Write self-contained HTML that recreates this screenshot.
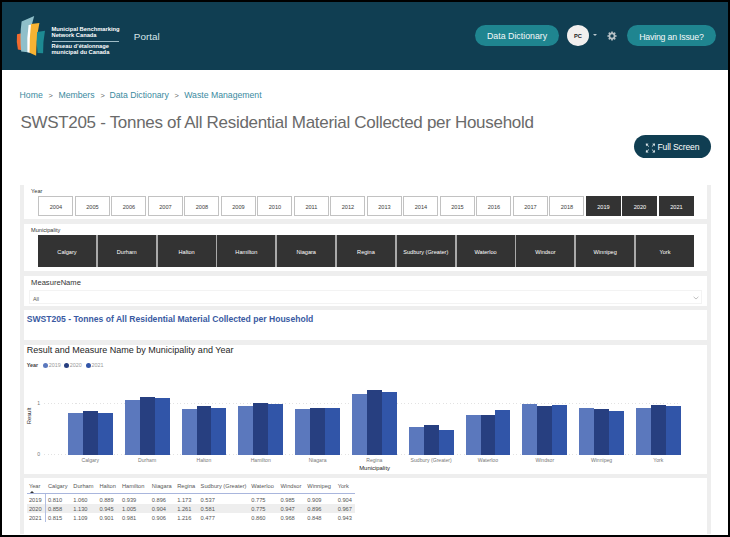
<!DOCTYPE html>
<html><head><meta charset="utf-8">
<style>
*{margin:0;padding:0;box-sizing:border-box}
html,body{width:730px;height:537px;overflow:hidden;background:#000}
body{position:relative;font-family:"Liberation Sans",sans-serif}
.a{position:absolute}
.t{position:absolute;white-space:nowrap;line-height:1}
</style></head><body>
<div class="a" style="left:2px;top:2px;width:726px;height:533px;background:#fff"></div>

<div class="a" style="left:2.00px;top:2.00px;width:726.00px;height:68.00px;background:#103e52"></div>
<svg class="a" style="left:14px;top:14px" width="34" height="44" viewBox="14 14 34 44">
<path d="M17 34.2 L21.6 33.3 L21.6 50.2 L17.9 49.6 Q16.2 42 17 34.2Z" fill="#f06a2e"/>
<path d="M21.6 21.6 L34.2 16.1 L31.6 25.5 L30 52.4 L21.2 51.5 Q19.6 36 21.6 21.6Z" fill="#8fbfca"/>
<path d="M28.6 24.9 L32 24.4 Q29.6 38 29.9 52.8 L27.4 52.3 Q26.6 38 28.6 24.9Z" fill="#ffffff"/>
<path d="M31 24 L39.4 23 Q36.4 38 36.1 55.7 L29.6 52.8 Q29.4 38 31 24Z" fill="#f8b332"/>
<path d="M37.1 31.9 L45 30.7 Q42.8 42 43.1 53.3 L37.6 52.9 Q35.8 42 37.1 31.9Z" fill="#1d8a92"/>
</svg>
<div class="t" style="left:51.50px;top:27.03px;font-size:5.75px;color:#fff;font-weight:bold">Municipal Benchmarking</div>
<div class="t" style="left:51.50px;top:32.63px;font-size:5.75px;color:#fff;font-weight:bold">Network Canada</div>
<div class="a" style="left:51.60px;top:40.50px;width:67.40px;height:0.70px;background:#9fbcc6"></div>
<div class="t" style="left:51.50px;top:43.93px;font-size:5.75px;color:#fff;font-weight:bold">R&eacute;seau d&rsquo;&eacute;talonnage</div>
<div class="t" style="left:51.50px;top:49.53px;font-size:5.75px;color:#fff;font-weight:bold">municipal du Canada</div>
<div class="t" style="left:133.80px;top:32.12px;font-size:9.90px;color:#d8e6ea">Portal</div>
<div class="a" style="left:475.00px;top:25.10px;width:83.50px;height:21.30px;background:#1f8590;border-radius:11px"></div>
<div class="t" style="left:487.00px;top:32.35px;font-size:8.80px;color:#f4f8f9">Data Dictionary</div>
<div class="a" style="left:567.20px;top:25.30px;width:21.50px;height:21.00px;background:#f1efee;border-radius:50%"></div>
<div class="t" style="left:570.50px;top:33.57px;font-size:5.70px;color:#222;font-weight:bold;width:15.00px;text-align:center">PC</div>
<div class="a" style="left:593.4px;top:34px;width:0;height:0;border-left:2.9px solid transparent;border-right:2.9px solid transparent;border-top:2.6px solid #b9c6cc"></div>
<svg class="a" style="left:606.6px;top:31px" width="10" height="10" viewBox="-5 -5 10 10">
<circle r="2.55" fill="none" stroke="#b7c1c6" stroke-width="1.7"/>
<g fill="#b7c1c6">
<rect x="-0.85" y="-4.6" width="1.7" height="9.2" rx="0.3"/>
<rect x="-0.85" y="-4.6" width="1.7" height="9.2" rx="0.3" transform="rotate(45)"/>
<rect x="-0.85" y="-4.6" width="1.7" height="9.2" rx="0.3" transform="rotate(90)"/>
<rect x="-0.85" y="-4.6" width="1.7" height="9.2" rx="0.3" transform="rotate(135)"/>
</g><circle r="1.7" fill="#103e52"/></svg>
<div class="a" style="left:627.00px;top:25.30px;width:88.50px;height:21.20px;background:#1f8590;border-radius:11px"></div>
<div class="t" style="left:639.20px;top:33.15px;font-size:8.80px;color:#f4f8f9;letter-spacing:-0.22px">Having an Issue?</div>
<div class="t" style="left:19.60px;top:91.04px;font-size:8.70px;color:#3b8aa0">Home</div>
<div class="t" style="left:58.40px;top:91.04px;font-size:8.70px;color:#3b8aa0">Members</div>
<div class="t" style="left:109.40px;top:91.04px;font-size:8.70px;color:#3b8aa0">Data Dictionary</div>
<div class="t" style="left:184.20px;top:91.04px;font-size:8.70px;color:#3b8aa0">Waste Management</div>
<div class="t" style="left:48.60px;top:91.84px;font-size:7.40px;color:#666">&gt;</div>
<div class="t" style="left:100.40px;top:91.84px;font-size:7.40px;color:#666">&gt;</div>
<div class="t" style="left:174.40px;top:91.84px;font-size:7.40px;color:#666">&gt;</div>
<div class="t" style="left:20.40px;top:113.81px;font-size:17.00px;color:#6a6a6a;letter-spacing:-0.3px">SWST205 - Tonnes of All Residential Material Collected per Household</div>
<div class="a" style="left:634.40px;top:135.20px;width:76.50px;height:22.50px;background:#103e52;border-radius:11.5px"></div>
<svg class="a" style="left:645px;top:143px" width="11" height="10" viewBox="0 0 11 10">
<g fill="#dde6ea" stroke="none">
<path d="M0.8 0.5 L3.6 0.7 L1.0 3.3Z"/>
<path d="M10.0 0.5 L7.2 0.7 L9.8 3.3Z"/>
<path d="M0.8 9.6 L3.6 9.4 L1.0 6.8Z"/>
<path d="M10.0 9.6 L7.2 9.4 L9.8 6.8Z"/>
</g>
<g stroke="#dde6ea" stroke-width="0.9" fill="none">
<path d="M2 1.8 L3.9 3.6 M8.8 1.8 L6.9 3.6 M2 8.3 L3.9 6.5 M8.8 8.3 L6.9 6.5"/>
</g></svg>
<div class="t" style="left:657.50px;top:142.82px;font-size:8.60px;color:#fff;letter-spacing:-0.15px">Full Screen</div>
<div class="a" style="left:20.00px;top:185.00px;width:690.60px;height:348.50px;background:#eeeeee"></div>
<div class="a" style="left:24.00px;top:185.00px;width:683.00px;height:34.00px;background:#fff"></div>
<div class="a" style="left:24.00px;top:224.00px;width:683.00px;height:47.00px;background:#fff"></div>
<div class="a" style="left:24.00px;top:275.50px;width:683.00px;height:30.00px;background:#fff"></div>
<div class="a" style="left:24.00px;top:309.70px;width:683.00px;height:30.70px;background:#fff"></div>
<div class="a" style="left:24.00px;top:344.50px;width:683.00px;height:129.00px;background:#fff"></div>
<div class="a" style="left:24.00px;top:478.00px;width:683.00px;height:55.50px;background:#fff"></div>
<div class="t" style="left:31.10px;top:189.36px;font-size:5.60px;color:#333">Year</div>
<div class="a" style="left:38.30px;top:196.00px;width:35.20px;height:20.00px;background:#fff;border:1px solid #c2c2c2"></div>
<div class="t" style="left:38.30px;top:204.86px;font-size:5.60px;color:#3d3d3d;width:35.20px;text-align:center">2004</div>
<div class="a" style="left:74.80px;top:196.00px;width:35.20px;height:20.00px;background:#fff;border:1px solid #c2c2c2"></div>
<div class="t" style="left:74.80px;top:204.86px;font-size:5.60px;color:#3d3d3d;width:35.20px;text-align:center">2005</div>
<div class="a" style="left:111.30px;top:196.00px;width:35.20px;height:20.00px;background:#fff;border:1px solid #c2c2c2"></div>
<div class="t" style="left:111.30px;top:204.86px;font-size:5.60px;color:#3d3d3d;width:35.20px;text-align:center">2006</div>
<div class="a" style="left:147.80px;top:196.00px;width:35.20px;height:20.00px;background:#fff;border:1px solid #c2c2c2"></div>
<div class="t" style="left:147.80px;top:204.86px;font-size:5.60px;color:#3d3d3d;width:35.20px;text-align:center">2007</div>
<div class="a" style="left:184.30px;top:196.00px;width:35.20px;height:20.00px;background:#fff;border:1px solid #c2c2c2"></div>
<div class="t" style="left:184.30px;top:204.86px;font-size:5.60px;color:#3d3d3d;width:35.20px;text-align:center">2008</div>
<div class="a" style="left:220.80px;top:196.00px;width:35.20px;height:20.00px;background:#fff;border:1px solid #c2c2c2"></div>
<div class="t" style="left:220.80px;top:204.86px;font-size:5.60px;color:#3d3d3d;width:35.20px;text-align:center">2009</div>
<div class="a" style="left:257.30px;top:196.00px;width:35.20px;height:20.00px;background:#fff;border:1px solid #c2c2c2"></div>
<div class="t" style="left:257.30px;top:204.86px;font-size:5.60px;color:#3d3d3d;width:35.20px;text-align:center">2010</div>
<div class="a" style="left:293.80px;top:196.00px;width:35.20px;height:20.00px;background:#fff;border:1px solid #c2c2c2"></div>
<div class="t" style="left:293.80px;top:204.86px;font-size:5.60px;color:#3d3d3d;width:35.20px;text-align:center">2011</div>
<div class="a" style="left:330.30px;top:196.00px;width:35.20px;height:20.00px;background:#fff;border:1px solid #c2c2c2"></div>
<div class="t" style="left:330.30px;top:204.86px;font-size:5.60px;color:#3d3d3d;width:35.20px;text-align:center">2012</div>
<div class="a" style="left:366.80px;top:196.00px;width:35.20px;height:20.00px;background:#fff;border:1px solid #c2c2c2"></div>
<div class="t" style="left:366.80px;top:204.86px;font-size:5.60px;color:#3d3d3d;width:35.20px;text-align:center">2013</div>
<div class="a" style="left:403.30px;top:196.00px;width:35.20px;height:20.00px;background:#fff;border:1px solid #c2c2c2"></div>
<div class="t" style="left:403.30px;top:204.86px;font-size:5.60px;color:#3d3d3d;width:35.20px;text-align:center">2014</div>
<div class="a" style="left:439.80px;top:196.00px;width:35.20px;height:20.00px;background:#fff;border:1px solid #c2c2c2"></div>
<div class="t" style="left:439.80px;top:204.86px;font-size:5.60px;color:#3d3d3d;width:35.20px;text-align:center">2015</div>
<div class="a" style="left:476.30px;top:196.00px;width:35.20px;height:20.00px;background:#fff;border:1px solid #c2c2c2"></div>
<div class="t" style="left:476.30px;top:204.86px;font-size:5.60px;color:#3d3d3d;width:35.20px;text-align:center">2016</div>
<div class="a" style="left:512.80px;top:196.00px;width:35.20px;height:20.00px;background:#fff;border:1px solid #c2c2c2"></div>
<div class="t" style="left:512.80px;top:204.86px;font-size:5.60px;color:#3d3d3d;width:35.20px;text-align:center">2017</div>
<div class="a" style="left:549.30px;top:196.00px;width:35.20px;height:20.00px;background:#fff;border:1px solid #c2c2c2"></div>
<div class="t" style="left:549.30px;top:204.86px;font-size:5.60px;color:#3d3d3d;width:35.20px;text-align:center">2018</div>
<div class="a" style="left:585.80px;top:196.00px;width:35.20px;height:20.00px;background:#333"></div>
<div class="t" style="left:585.80px;top:204.86px;font-size:5.60px;color:#fff;width:35.20px;text-align:center">2019</div>
<div class="a" style="left:622.30px;top:196.00px;width:35.20px;height:20.00px;background:#333"></div>
<div class="t" style="left:622.30px;top:204.86px;font-size:5.60px;color:#fff;width:35.20px;text-align:center">2020</div>
<div class="a" style="left:658.80px;top:196.00px;width:35.20px;height:20.00px;background:#333"></div>
<div class="t" style="left:658.80px;top:204.86px;font-size:5.60px;color:#fff;width:35.20px;text-align:center">2021</div>
<div class="t" style="left:31.10px;top:228.26px;font-size:5.60px;color:#333">Municipality</div>
<div class="a" style="left:37.90px;top:235.30px;width:656.20px;height:31.50px;background:#aaaaaa"></div>
<div class="a" style="left:37.90px;top:235.00px;width:58.20px;height:32.00px;background:#333"></div>
<div class="t" style="left:37.90px;top:250.26px;font-size:5.60px;color:#fff;width:58.20px;text-align:center">Calgary</div>
<div class="a" style="left:97.70px;top:235.00px;width:58.20px;height:32.00px;background:#333"></div>
<div class="t" style="left:97.70px;top:250.26px;font-size:5.60px;color:#fff;width:58.20px;text-align:center">Durham</div>
<div class="a" style="left:157.50px;top:235.00px;width:58.20px;height:32.00px;background:#333"></div>
<div class="t" style="left:157.50px;top:250.26px;font-size:5.60px;color:#fff;width:58.20px;text-align:center">Halton</div>
<div class="a" style="left:217.30px;top:235.00px;width:58.20px;height:32.00px;background:#333"></div>
<div class="t" style="left:217.30px;top:250.26px;font-size:5.60px;color:#fff;width:58.20px;text-align:center">Hamilton</div>
<div class="a" style="left:277.10px;top:235.00px;width:58.20px;height:32.00px;background:#333"></div>
<div class="t" style="left:277.10px;top:250.26px;font-size:5.60px;color:#fff;width:58.20px;text-align:center">Niagara</div>
<div class="a" style="left:336.90px;top:235.00px;width:58.20px;height:32.00px;background:#333"></div>
<div class="t" style="left:336.90px;top:250.26px;font-size:5.60px;color:#fff;width:58.20px;text-align:center">Regina</div>
<div class="a" style="left:396.70px;top:235.00px;width:58.20px;height:32.00px;background:#333"></div>
<div class="t" style="left:396.70px;top:250.26px;font-size:5.60px;color:#fff;width:58.20px;text-align:center">Sudbury (Greater)</div>
<div class="a" style="left:456.50px;top:235.00px;width:58.20px;height:32.00px;background:#333"></div>
<div class="t" style="left:456.50px;top:250.26px;font-size:5.60px;color:#fff;width:58.20px;text-align:center">Waterloo</div>
<div class="a" style="left:516.30px;top:235.00px;width:58.20px;height:32.00px;background:#333"></div>
<div class="t" style="left:516.30px;top:250.26px;font-size:5.60px;color:#fff;width:58.20px;text-align:center">Windsor</div>
<div class="a" style="left:576.10px;top:235.00px;width:58.20px;height:32.00px;background:#333"></div>
<div class="t" style="left:576.10px;top:250.26px;font-size:5.60px;color:#fff;width:58.20px;text-align:center">Winnipeg</div>
<div class="a" style="left:635.90px;top:235.00px;width:58.20px;height:32.00px;background:#333"></div>
<div class="t" style="left:635.90px;top:250.26px;font-size:5.60px;color:#fff;width:58.20px;text-align:center">York</div>
<div class="t" style="left:31.10px;top:279.07px;font-size:7.60px;color:#333">MeasureName</div>
<div class="a" style="left:29.30px;top:290.40px;width:672.60px;height:13.30px;background:#fff;border:1px solid #f3f3f3"></div>
<div class="t" style="left:33.00px;top:296.53px;font-size:5.40px;color:#555">All</div>
<svg class="a" style="left:692.6px;top:296px" width="6" height="4" viewBox="0 0 6 4"><path d="M0.6 0.8 L3 3 L5.4 0.8" stroke="#999" stroke-width="0.6" fill="none"/></svg>
<div class="t" style="left:26.80px;top:314.64px;font-size:8.58px;color:#3a5aa2;font-weight:bold">SWST205 - Tonnes of All Residential Material Collected per Household</div>
<div class="t" style="left:26.80px;top:346.38px;font-size:9.00px;color:#262626">Result and Measure Name by Municipality and Year</div>
<div class="t" style="left:26.70px;top:363.03px;font-size:5.40px;color:#444;font-weight:bold">Year</div>
<div class="a" style="left:42.90px;top:363.00px;width:5.20px;height:5.20px;background:#5b78bd;border-radius:50%"></div>
<div class="t" style="left:48.70px;top:363.13px;font-size:5.40px;color:#999">2019</div>
<div class="a" style="left:64.00px;top:363.00px;width:5.20px;height:5.20px;background:#273f80;border-radius:50%"></div>
<div class="t" style="left:69.80px;top:363.13px;font-size:5.40px;color:#999">2020</div>
<div class="a" style="left:85.80px;top:363.00px;width:5.20px;height:5.20px;background:#3155a8;border-radius:50%"></div>
<div class="t" style="left:91.60px;top:363.13px;font-size:5.40px;color:#999">2021</div>
<div class="a" style="left:44.4px;top:402.70px;width:637px;height:1px;background:repeating-linear-gradient(90deg,#e2e2e2 0 1px,transparent 1px 3.5px)"></div>
<div class="t" style="left:37.30px;top:400.78px;font-size:5.10px;color:#777">1</div>
<div class="a" style="left:44.4px;top:453.70px;width:637px;height:1px;background:repeating-linear-gradient(90deg,#e2e2e2 0 1px,transparent 1px 3.5px)"></div>
<div class="t" style="left:37.30px;top:451.78px;font-size:5.10px;color:#777">0</div>
<div class="t" style="left:29.6px;top:415.9px;font-size:5.9px;color:#333;transform:translate(-50%,-50%) rotate(-90deg)">Result</div>
<div class="a" style="left:68.00px;top:413.05px;width:14.95px;height:41.55px;background:#5b78bd"></div>
<div class="a" style="left:82.90px;top:410.58px;width:14.95px;height:44.02px;background:#273f80"></div>
<div class="a" style="left:97.80px;top:412.79px;width:14.95px;height:41.81px;background:#3155a8"></div>
<div class="t" style="left:50.35px;top:457.88px;font-size:5.10px;color:#777;width:80.00px;text-align:center">Calgary</div>
<div class="a" style="left:124.80px;top:400.22px;width:14.95px;height:54.38px;background:#5b78bd"></div>
<div class="a" style="left:139.70px;top:396.63px;width:14.95px;height:57.97px;background:#273f80"></div>
<div class="a" style="left:154.60px;top:397.71px;width:14.95px;height:56.89px;background:#3155a8"></div>
<div class="t" style="left:107.15px;top:457.88px;font-size:5.10px;color:#777;width:80.00px;text-align:center">Durham</div>
<div class="a" style="left:181.60px;top:408.99px;width:14.95px;height:45.61px;background:#5b78bd"></div>
<div class="a" style="left:196.50px;top:406.12px;width:14.95px;height:48.48px;background:#273f80"></div>
<div class="a" style="left:211.40px;top:408.38px;width:14.95px;height:46.22px;background:#3155a8"></div>
<div class="t" style="left:163.95px;top:457.88px;font-size:5.10px;color:#777;width:80.00px;text-align:center">Halton</div>
<div class="a" style="left:238.40px;top:406.43px;width:14.95px;height:48.17px;background:#5b78bd"></div>
<div class="a" style="left:253.30px;top:403.04px;width:14.95px;height:51.56px;background:#273f80"></div>
<div class="a" style="left:268.20px;top:404.27px;width:14.95px;height:50.33px;background:#3155a8"></div>
<div class="t" style="left:220.75px;top:457.88px;font-size:5.10px;color:#777;width:80.00px;text-align:center">Hamilton</div>
<div class="a" style="left:295.20px;top:408.64px;width:14.95px;height:45.96px;background:#5b78bd"></div>
<div class="a" style="left:310.10px;top:408.22px;width:14.95px;height:46.38px;background:#273f80"></div>
<div class="a" style="left:325.00px;top:408.12px;width:14.95px;height:46.48px;background:#3155a8"></div>
<div class="t" style="left:277.55px;top:457.88px;font-size:5.10px;color:#777;width:80.00px;text-align:center">Niagara</div>
<div class="a" style="left:352.00px;top:394.43px;width:14.95px;height:60.17px;background:#5b78bd"></div>
<div class="a" style="left:366.90px;top:389.91px;width:14.95px;height:64.69px;background:#273f80"></div>
<div class="a" style="left:381.80px;top:392.22px;width:14.95px;height:62.38px;background:#3155a8"></div>
<div class="t" style="left:334.35px;top:457.88px;font-size:5.10px;color:#777;width:80.00px;text-align:center">Regina</div>
<div class="a" style="left:408.80px;top:427.05px;width:14.95px;height:27.55px;background:#5b78bd"></div>
<div class="a" style="left:423.70px;top:424.79px;width:14.95px;height:29.81px;background:#273f80"></div>
<div class="a" style="left:438.60px;top:430.13px;width:14.95px;height:24.47px;background:#3155a8"></div>
<div class="t" style="left:391.15px;top:457.88px;font-size:5.10px;color:#777;width:80.00px;text-align:center">Sudbury (Greater)</div>
<div class="a" style="left:465.60px;top:414.84px;width:14.95px;height:39.76px;background:#5b78bd"></div>
<div class="a" style="left:480.50px;top:414.84px;width:14.95px;height:39.76px;background:#273f80"></div>
<div class="a" style="left:495.40px;top:410.48px;width:14.95px;height:44.12px;background:#3155a8"></div>
<div class="t" style="left:447.95px;top:457.88px;font-size:5.10px;color:#777;width:80.00px;text-align:center">Waterloo</div>
<div class="a" style="left:522.40px;top:404.07px;width:14.95px;height:50.53px;background:#5b78bd"></div>
<div class="a" style="left:537.30px;top:406.02px;width:14.95px;height:48.58px;background:#273f80"></div>
<div class="a" style="left:552.20px;top:404.94px;width:14.95px;height:49.66px;background:#3155a8"></div>
<div class="t" style="left:504.75px;top:457.88px;font-size:5.10px;color:#777;width:80.00px;text-align:center">Windsor</div>
<div class="a" style="left:579.20px;top:407.97px;width:14.95px;height:46.63px;background:#5b78bd"></div>
<div class="a" style="left:594.10px;top:408.64px;width:14.95px;height:45.96px;background:#273f80"></div>
<div class="a" style="left:609.00px;top:411.10px;width:14.95px;height:43.50px;background:#3155a8"></div>
<div class="t" style="left:561.55px;top:457.88px;font-size:5.10px;color:#777;width:80.00px;text-align:center">Winnipeg</div>
<div class="a" style="left:636.00px;top:408.22px;width:14.95px;height:46.38px;background:#5b78bd"></div>
<div class="a" style="left:650.90px;top:404.99px;width:14.95px;height:49.61px;background:#273f80"></div>
<div class="a" style="left:665.80px;top:406.22px;width:14.95px;height:48.38px;background:#3155a8"></div>
<div class="t" style="left:618.35px;top:457.88px;font-size:5.10px;color:#777;width:80.00px;text-align:center">York</div>
<div class="t" style="left:334.60px;top:465.51px;font-size:5.90px;color:#222;width:80.00px;text-align:center">Municipality</div>
<div class="a" style="left:27.00px;top:504.30px;width:327.70px;height:8.70px;background:#eeeeee"></div>
<div class="a" style="left:27.00px;top:493.30px;width:327.70px;height:1.00px;background:#a9b6dd"></div>
<div class="a" style="left:44.60px;top:493.80px;width:1.00px;height:28.40px;background:#b3bfe2"></div>
<div class="t" style="left:28.90px;top:484.37px;font-size:5.70px;color:#555">Year</div>
<div class="t" style="left:47.90px;top:484.37px;font-size:5.70px;color:#555">Calgary</div>
<div class="t" style="left:73.30px;top:484.37px;font-size:5.70px;color:#555">Durham</div>
<div class="t" style="left:99.40px;top:484.37px;font-size:5.70px;color:#555">Halton</div>
<div class="t" style="left:122.00px;top:484.37px;font-size:5.70px;color:#555">Hamilton</div>
<div class="t" style="left:151.80px;top:484.37px;font-size:5.70px;color:#555">Niagara</div>
<div class="t" style="left:177.20px;top:484.37px;font-size:5.70px;color:#555">Regina</div>
<div class="t" style="left:200.60px;top:484.37px;font-size:5.70px;color:#555">Sudbury (Greater)</div>
<div class="t" style="left:251.30px;top:484.37px;font-size:5.70px;color:#555">Waterloo</div>
<div class="t" style="left:280.50px;top:484.37px;font-size:5.70px;color:#555">Windsor</div>
<div class="t" style="left:307.30px;top:484.37px;font-size:5.70px;color:#555">Winnipeg</div>
<div class="t" style="left:337.70px;top:484.37px;font-size:5.70px;color:#555">York</div>
<div class="a" style="left:29.6px;top:490.9px;width:0;height:0;border-left:2px solid transparent;border-right:2px solid transparent;border-bottom:2.6px solid #333"></div>
<div class="t" style="left:28.90px;top:498.07px;font-size:5.70px;color:#555">2019</div>
<div class="t" style="left:47.90px;top:498.07px;font-size:5.70px;color:#555">0.810</div>
<div class="t" style="left:73.30px;top:498.07px;font-size:5.70px;color:#555">1.060</div>
<div class="t" style="left:99.40px;top:498.07px;font-size:5.70px;color:#555">0.889</div>
<div class="t" style="left:122.00px;top:498.07px;font-size:5.70px;color:#555">0.939</div>
<div class="t" style="left:151.80px;top:498.07px;font-size:5.70px;color:#555">0.896</div>
<div class="t" style="left:177.20px;top:498.07px;font-size:5.70px;color:#555">1.173</div>
<div class="t" style="left:200.60px;top:498.07px;font-size:5.70px;color:#555">0.537</div>
<div class="t" style="left:251.30px;top:498.07px;font-size:5.70px;color:#555">0.775</div>
<div class="t" style="left:280.50px;top:498.07px;font-size:5.70px;color:#555">0.985</div>
<div class="t" style="left:307.30px;top:498.07px;font-size:5.70px;color:#555">0.909</div>
<div class="t" style="left:337.70px;top:498.07px;font-size:5.70px;color:#555">0.904</div>
<div class="t" style="left:28.90px;top:506.97px;font-size:5.70px;color:#555">2020</div>
<div class="t" style="left:47.90px;top:506.97px;font-size:5.70px;color:#555">0.858</div>
<div class="t" style="left:73.30px;top:506.97px;font-size:5.70px;color:#555">1.130</div>
<div class="t" style="left:99.40px;top:506.97px;font-size:5.70px;color:#555">0.945</div>
<div class="t" style="left:122.00px;top:506.97px;font-size:5.70px;color:#555">1.005</div>
<div class="t" style="left:151.80px;top:506.97px;font-size:5.70px;color:#555">0.904</div>
<div class="t" style="left:177.20px;top:506.97px;font-size:5.70px;color:#555">1.261</div>
<div class="t" style="left:200.60px;top:506.97px;font-size:5.70px;color:#555">0.581</div>
<div class="t" style="left:251.30px;top:506.97px;font-size:5.70px;color:#555">0.775</div>
<div class="t" style="left:280.50px;top:506.97px;font-size:5.70px;color:#555">0.947</div>
<div class="t" style="left:307.30px;top:506.97px;font-size:5.70px;color:#555">0.896</div>
<div class="t" style="left:337.70px;top:506.97px;font-size:5.70px;color:#555">0.967</div>
<div class="t" style="left:28.90px;top:515.87px;font-size:5.70px;color:#555">2021</div>
<div class="t" style="left:47.90px;top:515.87px;font-size:5.70px;color:#555">0.815</div>
<div class="t" style="left:73.30px;top:515.87px;font-size:5.70px;color:#555">1.109</div>
<div class="t" style="left:99.40px;top:515.87px;font-size:5.70px;color:#555">0.901</div>
<div class="t" style="left:122.00px;top:515.87px;font-size:5.70px;color:#555">0.981</div>
<div class="t" style="left:151.80px;top:515.87px;font-size:5.70px;color:#555">0.906</div>
<div class="t" style="left:177.20px;top:515.87px;font-size:5.70px;color:#555">1.216</div>
<div class="t" style="left:200.60px;top:515.87px;font-size:5.70px;color:#555">0.477</div>
<div class="t" style="left:251.30px;top:515.87px;font-size:5.70px;color:#555">0.860</div>
<div class="t" style="left:280.50px;top:515.87px;font-size:5.70px;color:#555">0.968</div>
<div class="t" style="left:307.30px;top:515.87px;font-size:5.70px;color:#555">0.848</div>
<div class="t" style="left:337.70px;top:515.87px;font-size:5.70px;color:#555">0.943</div>
</body></html>
